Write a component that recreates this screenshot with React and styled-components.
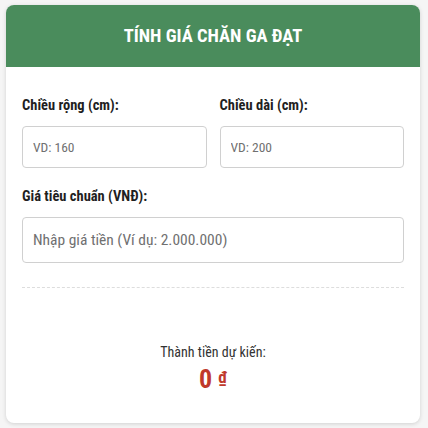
import React from 'react';
import styled, { createGlobalStyle } from 'styled-components';

const GlobalStyle = createGlobalStyle`
    body {
        margin: 0;
        background: #f5f5f5;
        font-family: "Roboto Condensed", Roboto, "Liberation Sans", sans-serif;
        font-stretch: condensed;
    }
`;

const Page = styled.div`
    padding: 5px 8px 5px 6px;
`;

const Card = styled.div`
    background: #ffffff;
    border-radius: 8px;
    box-shadow: 0 1px 4px rgba(0, 0, 0, 0.15);
    overflow: hidden;
    height: 418px;
    display: flex;
    flex-direction: column;
`;

const Header = styled.div`
    background: #4a8c5c;
    color: white;
    height: 62px;
    display: flex;
    align-items: center;
    justify-content: center;
    font-size: 18.5px;
    font-weight: bold;
`;

const Body = styled.div`
    padding: 30px 16px 0 16px;
    display: flex;
    flex-direction: column;
`;

const Row = styled.div`
    display: grid;
    grid-template-columns: 1fr 1fr;
    gap: 13px;
`;

const Field = styled.div`
    display: flex;
    flex-direction: column;
    min-width: 0;
    margin-bottom: ${(p) => p.$mb || 0}px;
`;

const Label = styled.label`
    font-size: 14.5px;
    font-weight: bold;
    color: #1f1f1f;
    margin-bottom: 12px;
`;

const Input = styled.input`
    box-sizing: border-box;
    width: 100%;
    min-width: 0;
    height: ${(p) => p.$h}px;
    border: 1px solid #d0d0d0;
    border-radius: 4px;
    padding: 0 10px;
    font-family: inherit;
    font-stretch: condensed;
    font-size: ${(p) => p.$fs}px;
    outline: none;
    &::placeholder {
        color: #707070;
    }
`;

const Divider = styled.hr`
    border: none;
    border-top: 1px dashed #dddddd;
    margin: 24px 0 0 0;
`;

const Result = styled.div`
    display: flex;
    flex-direction: column;
    align-items: center;
    margin-top: 56px;
`;

const ResultLabel = styled.div`
    font-size: 14px;
    color: #333;
`;

const Amount = styled.div`
    display: flex;
    align-items: flex-start;
    gap: 6px;
    margin-top: 5px;
    color: #c0392b;
    font-weight: bold;
`;

const Number = styled.span`
    font-size: 26px;
    line-height: 28px;
`;

const Currency = styled.span`
    font-size: 17px;
    line-height: 24px;
`;

export default function App() {
    return (
        <>
            <GlobalStyle />
            <Page>
                <Card>
                    <Header>TÍNH GIÁ CHĂN GA ĐẠT</Header>
                    <Body>
                        <Row>
                            <Field $mb={20}>
                                <Label>Chiều rộng (cm):</Label>
                                <Input $h={42} $fs={13.5} placeholder="VD: 160" />
                            </Field>
                            <Field $mb={20}>
                                <Label>Chiều dài (cm):</Label>
                                <Input $h={42} $fs={13.5} placeholder="VD: 200" />
                            </Field>
                        </Row>
                        <Field>
                            <Label>Giá tiêu chuẩn (VNĐ):</Label>
                            <Input $h={46} $fs={15.5} placeholder="Nhập giá tiền (Ví dụ: 2.000.000)" />
                        </Field>
                        <Divider />
                        <Result>
                            <ResultLabel>Thành tiền dự kiến:</ResultLabel>
                            <Amount>
                                <Number>0</Number>
                                <Currency>₫</Currency>
                            </Amount>
                        </Result>
                    </Body>
                </Card>
            </Page>
        </>
    );
}
